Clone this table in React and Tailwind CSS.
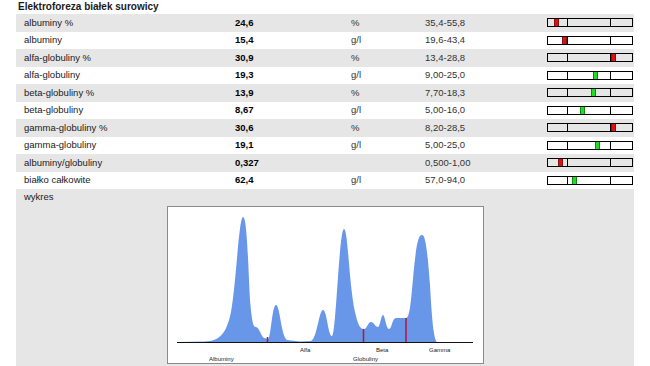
import React from "react";

const rows = [
  { name: "albuminy %", value: "24,6", unit: "%", range: "35,4-55,8", mark: 6, ok: false },
  { name: "albuminy", value: "15,4", unit: "g/l", range: "19,6-43,4", mark: 14, ok: false },
  { name: "alfa-globuliny %", value: "30,9", unit: "%", range: "13,4-28,8", mark: 63, ok: false },
  { name: "alfa-globuliny", value: "19,3", unit: "g/l", range: "9,00-25,0", mark: 45, ok: true },
  { name: "beta-globuliny %", value: "13,9", unit: "%", range: "7,70-18,3", mark: 43, ok: true },
  { name: "beta-globuliny", value: "8,67", unit: "g/l", range: "5,00-16,0", mark: 32, ok: true },
  { name: "gamma-globuliny %", value: "30,6", unit: "%", range: "8,20-28,5", mark: 63, ok: false },
  { name: "gamma-globuliny", value: "19,1", unit: "g/l", range: "5,00-25,0", mark: 47, ok: true },
  { name: "albuminy/globuliny", value: "0,327", unit: "", range: "0,500-1,00", mark: 10, ok: false },
  { name: "białko całkowite", value: "62,4", unit: "g/l", range: "57,0-94,0", mark: 24, ok: true },
];

// small range bar with two normal-range ticks
function RangeBar({ mark, ok }) {
  return (
    <div className="relative w-[86px] h-[9px] border border-black">
      <div className="absolute left-[19px] top-0 bottom-0 w-px bg-black" />
      <div className="absolute left-[62px] top-0 bottom-0 w-px bg-black" />
      <div
        className={ok ? "absolute top-0 bottom-0 w-[5px] bg-[#22dd22] border-x border-[#118811]" : "absolute top-0 bottom-0 w-[5px] bg-[#dd1111] border-x border-[#881111]"}
        style={{ left: mark }}
      />
    </div>
  );
}

function Chart() {
  const curve =
    "M177,342 L205,341.5 C218,341 226,336 231,312 C236,285 239,217 243,217 C247,217 248,262 250,300 C252,322 253,327 256,327 C259,327 261,336 264,338 L268,339 C271,338 272,305 276,305 C280,305 281,336 287,340 L300,341.5 L311,341 C317,339 319,310 323,310 C327,310 328,336 332,336 C336,336 339,229 344,229 C348,229 349,285 355,312 C358,325 360,329 364,329 C367,329 368,322 371,322 C374,322 375,327 378,327 C380,327 381,315 383,315 C385,315 386,329 389,329 C392,329 392,318 396,318 L406,318 C410,318 411,300 414,268 C417,240 419,235 422,235 C425,235 427,245 430,285 C432,322 434,340 437,342 L473,342 Z";
  return (
    <div className="ml-[151px] w-[317px] h-[158px] border border-[#8a8a8a] bg-white">
      <svg width="315" height="156" viewBox="168 207 315 156">
        <path d={curve} fill="#6896e8" />
        <line x1="177" y1="342.5" x2="473" y2="342.5" stroke="#111" strokeWidth="1" />
        <line x1="267.5" y1="337" x2="267.5" y2="342" stroke="#b0153a" strokeWidth="1.5" />
        <line x1="363.5" y1="329" x2="363.5" y2="342" stroke="#b0153a" strokeWidth="1.5" />
        <line x1="406" y1="318" x2="406" y2="342" stroke="#b0153a" strokeWidth="1.5" />
        <g fontFamily="Liberation Sans, Arial, sans-serif" fontSize="6" fill="#222">
          <text x="300" y="352">Alfa</text>
          <text x="376" y="352">Beta</text>
          <text x="429" y="352">Gamma</text>
          <text x="209" y="361">Albuminy</text>
          <text x="353" y="361">Globuliny</text>
        </g>
      </svg>
    </div>
  );
}

export default function App() {
  return (
    <div className="w-[650px] bg-white font-['Liberation_Sans',Arial,sans-serif] text-[#1a1a1a]">
      <div className="h-[14px] pl-[18px] text-[10px] font-bold leading-[12px] pt-px">
        Elektroforeza białek surowicy
      </div>
      <div className="mx-[16px]">
        {rows.map((r, i) => (
          <div
            key={r.name}
            className={`flex items-center h-[17.5px] text-[9.5px] ${i % 2 === 0 ? "bg-[#e6e6e6]" : "bg-white"}`}
          >
            <div className="w-[219px] pl-[8px]">{r.name}</div>
            <div className="w-[116px] font-bold text-black">{r.value}</div>
            <div className="w-[74px] text-[#333]">{r.unit}</div>
            <div className="w-[122px] text-[#333]">{r.range}</div>
            <RangeBar mark={r.mark} ok={r.ok} />
          </div>
        ))}
        <div className="bg-[#e6e6e6] pb-[6px]">
          <div className="h-[17px] flex items-center pl-[8px] text-[9.5px]">wykres</div>
          <Chart />
        </div>
      </div>
    </div>
  );
}
